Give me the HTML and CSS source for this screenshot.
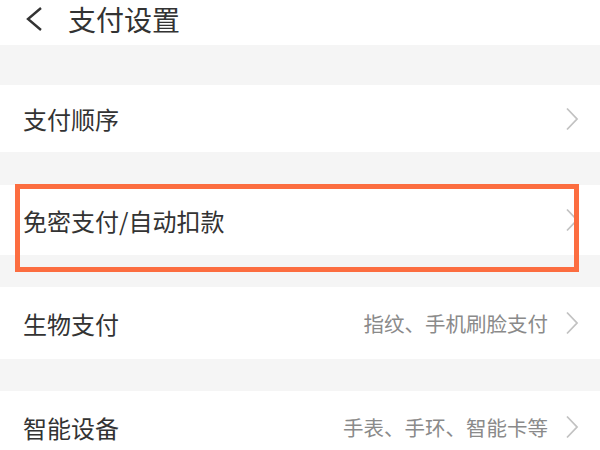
FILE: index.html
```html
<!DOCTYPE html>
<html lang="zh-CN">

<head>
    <meta charset="UTF-8">
    <meta name="viewport" content="width=device-width, initial-scale=1.0">
    <title>支付设置</title>
    <link rel="stylesheet" href="styles.css">
</head>

<body>
    <div class="header">
        <svg class="back" width="20" height="26" viewBox="0 0 20 26">
            <path d="M17 2 L4 13 L17 24" fill="none" stroke="#333" stroke-width="2.4" />
        </svg>
        <span class="title">支付设置</span>
    </div>

    <div class="list">
        <div class="row first">
            <span class="label">支付顺序</span>
            <svg class="arrow" width="14" height="24" viewBox="0 0 14 24">
                <path d="M2 1.5 L12 12 L2 22.5" fill="none" stroke="#c2c2c2" stroke-width="1.8" />
            </svg>
        </div>
        <div class="row mid">
            <span class="label">免密支付/自动扣款</span>
            <svg class="arrow" width="14" height="24" viewBox="0 0 14 24">
                <path d="M2 1.5 L12 12 L2 22.5" fill="none" stroke="#c2c2c2" stroke-width="1.8" />
            </svg>
            <div class="mark"></div>
        </div>
        <div class="row tall">
            <span class="label">生物支付</span>
            <span class="hint">指纹、手机刷脸支付</span>
            <svg class="arrow" width="14" height="24" viewBox="0 0 14 24">
                <path d="M2 1.5 L12 12 L2 22.5" fill="none" stroke="#c2c2c2" stroke-width="1.8" />
            </svg>
        </div>
        <div class="row tall">
            <span class="label">智能设备</span>
            <span class="hint">手表、手环、智能卡等</span>
            <svg class="arrow" width="14" height="24" viewBox="0 0 14 24">
                <path d="M2 1.5 L12 12 L2 22.5" fill="none" stroke="#c2c2c2" stroke-width="1.8" />
            </svg>
        </div>
    </div>
</body>

</html>
```

FILE: styles.css
```css
* {
    margin: 0;
    padding: 0;
    box-sizing: border-box;
}

body {
    background: #f5f5f5;
    font-family: "Noto Sans CJK SC", "Noto Sans", sans-serif;
    color: #333;
    overflow: hidden;
}

.header {
    height: 45px;
    background: #fff;
    display: flex;
    align-items: center;
    padding-left: 24px;
    padding-bottom: 8px;
}

.back {
    margin-right: 24px;
}

.title {
    font-size: 28px;
    line-height: 30px;
    color: #333;
}

.list {
    padding-top: 40px;
}

.row {
    position: relative;
    background: #fff;
    display: flex;
    align-items: center;
    padding: 0 21px 0 23px;
    height: 70px;
    margin-top: 33px;
}

.row.first {
    margin-top: 0;
    height: 67px;
}

.row.tall {
    height: 72px;
    margin-top: 32px;
}

.label {
    font-size: 24px;
    flex: 1;
}

.hint {
    font-size: 20.5px;
    color: #8a8a8a;
    margin-right: 17px;
}

.mark {
    position: absolute;
    left: 15px;
    right: 21px;
    top: -1px;
    bottom: -17px;
    border: 5px solid #fc6d40;
}
```
